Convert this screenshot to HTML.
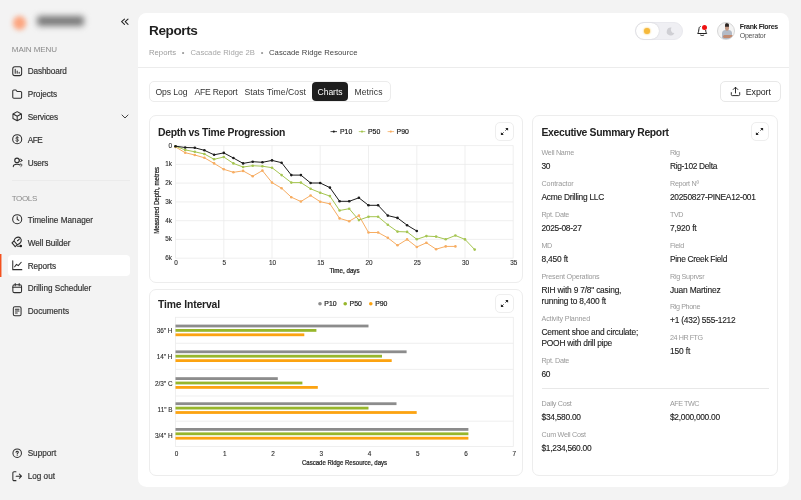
<!DOCTYPE html>
<html><head><meta charset="utf-8"><title>Reports</title>
<style>
*{box-sizing:border-box;margin:0;padding:0}
html,body{width:801px;height:500px;overflow:hidden}
body{background:#f3f3f3;font-family:"Liberation Sans",sans-serif;position:relative;color:#2a2a2a}
.t{position:absolute;white-space:nowrap;line-height:1}
.abs{position:absolute}
.main{position:absolute;left:138px;top:13px;width:651px;height:474px;background:#fff;border-radius:8.5px}
.hr{position:absolute;height:1px;background:#ececec}
.card{position:absolute;background:#fff;border:1px solid #ededed;border-radius:7px}
.btn{position:absolute;background:#fff;border:1px solid #e8e8e8;border-radius:5px}
svg{position:absolute;left:0;top:0;overflow:visible}
svg text{font-family:"Liberation Sans",sans-serif}
.ax{font-size:6.4px;fill:#2c2c2c;stroke:#2c2c2c;stroke-width:0.12px}
.lg{font-size:6.9px;fill:#1e1e1e;stroke:#1e1e1e;stroke-width:0.2px}
.axt{font-size:6.4px;fill:#1e1e1e;stroke:#1e1e1e;stroke-width:0.22px}
.ico{position:absolute;fill:none;stroke:#2e2e2e;stroke-width:1.1;stroke-linecap:round;stroke-linejoin:round}
.nav{color:#333;-webkit-text-stroke:0.18px #333}
.sec{color:#8a8a8a}
.lab{color:#999}
.val{color:#222;-webkit-text-stroke:0.12px #222}
#root{position:absolute;left:0;top:0;width:801px;height:500px;will-change:transform;transform:translateZ(0)}
</style></head><body><div id="root">

<!-- ============ SIDEBAR ============ -->
<div class="abs" style="left:13.4px;top:16px;width:12.5px;height:13.5px;border-radius:6.5px;background:#fca57f;filter:blur(2.6px)"></div>
<div class="abs" style="left:36.5px;top:16.4px;width:47.5px;height:9.5px;border-radius:3px;background:#787878;filter:blur(3px)"></div>
<svg class="ico" style="left:118px;top:16px" width="14" height="12" viewBox="0 0 14 12"><path d="M6.5 3.1 L3.6 5.7 L6.5 8.3 M10 3.1 L7.2 5.7 L10 8.3" stroke="#222" stroke-width="1.1"/></svg>

<div class="abs" style="left:0;top:253.7px;width:2px;height:23.3px;background:linear-gradient(90deg,#f4511e 0,#f4511e 1px,rgba(244,81,30,.45) 1px)"></div>
<div class="abs" style="left:8px;top:255px;width:122px;height:21px;background:#fff;border-radius:4px"></div>
<div class="t sec" style="left:11.8px;top:46px;font-size:8px;letter-spacing:-0.065px;">MAIN MENU</div><div class="t sec" style="left:11.7px;top:195px;font-size:8px;letter-spacing:-0.357px;">TOOLS</div>

<svg class="ico" style="left:11.8px;top:65.6px" width="10.4" height="10.4" viewBox="0 0 11 11"><rect x="0.8" y="0.8" width="9.4" height="9.4" rx="2.2"/><path d="M3.4 3.4 V7.6 M5.5 5.4 V7.6 M7.6 6.6 V7.6"/></svg>
<div class="t nav" style="left:27.7px;top:68px;font-size:8.2px;letter-spacing:-0.107px;">Dashboard</div>
<svg class="ico" style="left:12.0px;top:88.6px" width="10.4" height="10.4" viewBox="0 0 11 11"><path d="M0.8 2.2 A1.2 1.2 0 0 1 2 1 H4.2 L5.4 2.6 H9 A1.2 1.2 0 0 1 10.2 3.8 V8.6 A1.2 1.2 0 0 1 9 9.8 H2 A1.2 1.2 0 0 1 0.8 8.6 Z"/></svg>
<div class="t nav" style="left:27.7px;top:91px;font-size:8.2px;letter-spacing:-0.010px;">Projects</div>
<svg class="ico" style="left:12.0px;top:111.4px" width="10.4" height="10.4" viewBox="0 0 11 11"><path d="M5.5 0.7 L10 3.1 V7.9 L5.5 10.3 L1 7.9 V3.1 Z M1.2 3.2 L5.5 5.5 L9.8 3.2 M5.5 5.5 V10.2"/></svg>
<div class="t nav" style="left:27.7px;top:114px;font-size:8.2px;letter-spacing:-0.138px;">Services</div>
<svg class="ico" style="left:11.7px;top:134.2px" width="10.4" height="10.4" viewBox="0 0 11 11"><circle cx="5.5" cy="5.5" r="4.8"/><path d="M7 3.9 C6.6 3.2 4.2 3 4.1 4.4 C4 5.7 7 5.2 6.9 6.7 C6.8 8 4.5 7.9 3.9 7 M5.5 2.6 V8.4" stroke-width="0.85"/></svg>
<div class="t nav" style="left:27.7px;top:137px;font-size:8.2px;letter-spacing:-0.450px;">AFE</div>
<svg class="ico" style="left:8px;top:152px" width="20" height="20" viewBox="0 0 20 20"><circle cx="9" cy="8.4" r="2.25"/><path d="M5.3 14.6 C5.3 13.1 6.7 12.3 9 12.3 C10.3 12.3 11.3 12.5 12 13"/><circle cx="12.7" cy="8.4" r="1.2" stroke-width="0.9"/><path d="M12.3 12 C13.5 11.8 14.3 12.6 13.9 13.5 L12.9 14.4" stroke-width="0.9"/></svg>
<div class="t nav" style="left:27.7px;top:160px;font-size:8.2px;letter-spacing:-0.198px;">Users</div>
<svg class="ico" style="left:11.8px;top:214.2px" width="10.4" height="10.4" viewBox="0 0 11 11"><circle cx="5.5" cy="5.5" r="4.8"/><path d="M5.5 2.8 V5.6 L7.2 6.8"/></svg>
<div class="t nav" style="left:27.7px;top:217px;font-size:8.2px;letter-spacing:0.010px;">Timeline Manager</div>
<svg class="ico" style="left:8px;top:232px" width="20" height="20" viewBox="0 0 20 20"><path d="M4 10.8 L7.2 14.7 L9.3 12.8 L6 9 Z M6 9 C6.3 7.6 7 6.4 8 5.8 C9.4 4.9 11.4 5.1 12.4 6 C13.3 7 13.5 8.4 13.1 9.5 C12.6 10.8 11.2 12.1 9.3 12.8 M9.7 8.6 L11.3 7.1 M9.6 14.3 H11.4"/><circle cx="9.7" cy="8.6" r="0.7" fill="#2e2e2e" stroke="none"/><circle cx="12.8" cy="14.1" r="1.25" fill="#1e1e1e" stroke="none"/></svg>
<div class="t nav" style="left:27.7px;top:240px;font-size:8.2px;letter-spacing:-0.071px;">Well Builder</div>
<svg class="ico" style="left:12.0px;top:260.2px" width="10.4" height="10.4" viewBox="0 0 11 11"><path d="M0.8 0.8 V10.2 H10.4 M2.8 7.2 L4.8 4.6 L6.6 6 L9.8 2.4"/></svg>
<div class="t nav" style="left:27.7px;top:263px;font-size:8.2px;letter-spacing:-0.053px;">Reports</div>
<svg class="ico" style="left:11.9px;top:283.2px" width="10.4" height="10.4" viewBox="0 0 11 11"><rect x="0.9" y="1.8" width="9.2" height="8.4" rx="1.8"/><path d="M0.9 4.6 H10.1 M3.4 0.6 V2.8 M7.6 0.6 V2.8"/></svg>
<div class="t nav" style="left:27.7px;top:285px;font-size:8.2px;letter-spacing:-0.032px;">Drilling Scheduler</div>
<svg class="ico" style="left:12.0px;top:306.2px" width="10.4" height="10.4" viewBox="0 0 11 11"><rect x="1.4" y="0.7" width="8.2" height="9.6" rx="1.6"/><path d="M3.6 3.4 H7.4 M3.6 5.4 H7.4 M3.6 7.4 H5.6"/></svg>
<div class="t nav" style="left:27.7px;top:308px;font-size:8.2px;letter-spacing:-0.014px;">Documents</div>
<svg class="ico" style="left:11.9px;top:447.9px" width="10.4" height="10.4" viewBox="0 0 11 11"><circle cx="5.5" cy="5.5" r="4.5"/><path d="M4.3 4.5 C4.3 3.2 6.7 3.2 6.7 4.5 C6.7 5.3 5.5 5.3 5.5 6.3" stroke-width="1.1"/><circle cx="5.5" cy="7.8" r="0.55" fill="#333" stroke="none"/></svg>
<div class="t nav" style="left:27.7px;top:450px;font-size:8.2px;letter-spacing:-0.027px;">Support</div>
<svg class="ico" style="left:11.8px;top:470.7px" width="10.4" height="10.4" viewBox="0 0 11 11"><path d="M4.2 0.8 H2.2 A1.3 1.3 0 0 0 0.9 2.1 V8.9 A1.3 1.3 0 0 0 2.2 10.2 H4.2 M4.4 5.5 H10 M7.8 3.3 L10 5.5 L7.8 7.7"/></svg>
<div class="t nav" style="left:27.7px;top:473px;font-size:8.2px;letter-spacing:-0.004px;">Log out</div>
<svg class="ico" style="left:120.5px;top:114.2px" width="8" height="5" viewBox="0 0 8 5"><path d="M1 1 L4 4 L7 1" stroke-width="0.9"/></svg>


<div class="hr" style="left:12px;top:180px;width:118px;background:#ebebeb"></div>


<!-- ============ MAIN ============ -->
<div class="main"></div>
<div class="hr" style="left:138px;top:67px;width:651px"></div>

<!-- toggle -->
<div class="abs" style="left:634.5px;top:22px;width:48.5px;height:18px;border-radius:9px;background:#efeff3;border:1px solid #e9e9ee"></div>
<div class="abs" style="left:635.5px;top:23px;width:23.5px;height:16px;border-radius:8px;background:#fff;box-shadow:0 0 1.5px rgba(0,0,0,.18)"></div>
<div class="abs" style="left:643.6px;top:27.9px;width:6.4px;height:6.4px;border-radius:50%;background:#f6b93b;box-shadow:0 0 1.6px 0.6px #fad98a"></div>
<svg class="abs" style="left:665.5px;top:26.5px" width="9" height="9" viewBox="0 0 9 9"><path d="M5.6 0.6 A4 4 0 1 0 8.4 6.1 A3.4 3.4 0 0 1 5.6 0.6 Z" fill="#cfcfd4"/></svg>
<!-- bell -->
<svg class="abs" style="left:696px;top:24px" width="13" height="13" viewBox="0 0 13 13"><path d="M4.2 2.6 C3.4 2.9 3.1 3.6 3 4.6 L2.5 7.8 C2.4 8.6 1.9 8.9 1.7 9.5 H10.7 C10.5 8.9 10 8.6 9.9 7.8 L9.7 6.4 M4.6 11.2 C5.3 11.7 7.1 11.7 7.8 11.2" fill="none" stroke="#222" stroke-width="1" stroke-linecap="round" stroke-linejoin="round"/></svg>
<div class="abs" style="left:702.2px;top:24.8px;width:5.2px;height:5.2px;border-radius:50%;background:#ef1111"></div>
<!-- avatar -->
<div class="abs" style="left:717px;top:21.7px;width:18.4px;height:18.4px;border-radius:50%;background:#f4f4f4;border:0.7px solid #d6d6d6;overflow:hidden">
  <div class="abs" style="left:3.8px;top:7.6px;width:10.6px;height:9px;border-radius:3.5px 3.5px 1px 1px;background:#b2bac6"></div>
  <div class="abs" style="left:6.5px;top:1.4px;width:4.9px;height:6.6px;border-radius:45%;background:#c49a85"></div>
  <div class="abs" style="left:6.6px;top:0.8px;width:4.7px;height:2.3px;border-radius:2.3px 2.3px 0.5px 0.5px;background:#2b2522"></div>
  <div class="abs" style="left:7px;top:3.6px;width:3.9px;height:0.9px;background:#3a302c;opacity:.8"></div>
  <div class="abs" style="left:4.6px;top:12.2px;width:11.2px;height:3.6px;border-radius:2px;background:#c08a70"></div>
  <div class="abs" style="left:5.2px;top:15px;width:9.6px;height:3px;background:#b2bac6"></div>
</div>
<!-- tabs -->
<div class="btn" style="left:149px;top:81px;width:241.5px;height:21px;border-radius:5px;border-color:#ececec"></div>
<div class="abs" style="left:312.3px;top:82.3px;width:35.5px;height:18.5px;border-radius:4px;background:#1e1e1e"></div>

<!-- export -->
<div class="btn" style="left:720px;top:81px;width:60.5px;height:21px;border-radius:5px"></div>
<svg class="ico" style="left:730px;top:86px" width="11" height="11" viewBox="0 0 11 11"><path d="M5.5 7 V1.4 M3.2 3.5 L5.5 1.2 L7.8 3.5 M1.3 6.6 V8.6 A1 1 0 0 0 2.3 9.6 H8.7 A1 1 0 0 0 9.7 8.6 V6.6" stroke="#222" stroke-width="0.95"/></svg>

<!-- cards -->
<div class="card" style="left:149px;top:115px;width:373.5px;height:167.5px"></div>
<div class="card" style="left:149px;top:288.5px;width:373.5px;height:187px"></div>
<div class="card" style="left:532px;top:115px;width:245.5px;height:360.5px"></div>


<!-- expand buttons -->
<div class="btn" style="left:495.1px;top:121.9px;width:18.6px;height:18.8px;border-radius:5px;border-color:#eeeeee"></div>
<svg class="abs" style="left:499.9px;top:126.8px" width="9" height="9" viewBox="0 0 9 9"><path d="M5.2 0.9 H8.1 V3.8 Z M0.9 5.2 V8.1 H3.8 Z" fill="#222"/><path d="M7.6 1.4 L5.4 3.6 M1.4 7.6 L3.6 5.4" stroke="#222" stroke-width="0.9" fill="none"/></svg>
<div class="btn" style="left:495.1px;top:294.0px;width:18.6px;height:18.8px;border-radius:5px;border-color:#eeeeee"></div>
<svg class="abs" style="left:499.9px;top:298.9px" width="9" height="9" viewBox="0 0 9 9"><path d="M5.2 0.9 H8.1 V3.8 Z M0.9 5.2 V8.1 H3.8 Z" fill="#222"/><path d="M7.6 1.4 L5.4 3.6 M1.4 7.6 L3.6 5.4" stroke="#222" stroke-width="0.9" fill="none"/></svg>
<div class="btn" style="left:750.5px;top:122.0px;width:18.6px;height:18.8px;border-radius:5px;border-color:#eeeeee"></div>
<svg class="abs" style="left:755.3px;top:126.9px" width="9" height="9" viewBox="0 0 9 9"><path d="M5.2 0.9 H8.1 V3.8 Z M0.9 5.2 V8.1 H3.8 Z" fill="#222"/><path d="M7.6 1.4 L5.4 3.6 M1.4 7.6 L3.6 5.4" stroke="#222" stroke-width="0.9" fill="none"/></svg>


<!-- legends -->
<svg width="801" height="500" viewBox="0 0 801 500">
<g>
<line x1="330.5" x2="337" y1="131.6" y2="131.6" stroke="#1c1c1c" stroke-width="0.8"/><circle cx="333.8" cy="131.6" r="1.1" fill="#1c1c1c"/>
<line x1="358.8" x2="365.3" y1="131.6" y2="131.6" stroke="#a5c551" stroke-width="0.8"/><circle cx="362" cy="131.6" r="1.1" fill="#a5c551"/>
<line x1="387.6" x2="394.1" y1="131.6" y2="131.6" stroke="#f7ad62" stroke-width="0.8"/><circle cx="390.8" cy="131.6" r="1.1" fill="#f7ad62"/>
<text x="340" y="134" class="lg">P10</text>
<text x="368" y="134" class="lg">P50</text>
<text x="396.6" y="134" class="lg">P90</text>
<circle cx="320" cy="303.8" r="1.8" fill="#8c8c8c"/><circle cx="345.2" cy="303.8" r="1.8" fill="#97b62b"/><circle cx="370.8" cy="303.8" r="1.8" fill="#fca311"/>
<text x="324.3" y="306.2" class="lg">P10</text>
<text x="349.6" y="306.2" class="lg">P50</text>
<text x="375.2" y="306.2" class="lg">P90</text>
</g>
<line x1="175.5" x2="513.2" y1="145.6" y2="145.6" stroke="#ebebeb" stroke-width="0.8"/><line x1="175.5" x2="513.2" y1="164.4" y2="164.4" stroke="#ebebeb" stroke-width="0.8"/><line x1="175.5" x2="513.2" y1="183.1" y2="183.1" stroke="#ebebeb" stroke-width="0.8"/><line x1="175.5" x2="513.2" y1="201.9" y2="201.9" stroke="#ebebeb" stroke-width="0.8"/><line x1="175.5" x2="513.2" y1="220.7" y2="220.7" stroke="#ebebeb" stroke-width="0.8"/><line x1="175.5" x2="513.2" y1="239.4" y2="239.4" stroke="#ebebeb" stroke-width="0.8"/><line x1="175.5" x2="513.2" y1="258.2" y2="258.2" stroke="#ebebeb" stroke-width="0.8"/><line x1="175.5" x2="175.5" y1="145.6" y2="258.2" stroke="#ebebeb" stroke-width="0.8"/><line x1="223.8" x2="223.8" y1="145.6" y2="258.2" stroke="#ebebeb" stroke-width="0.8"/><line x1="272.0" x2="272.0" y1="145.6" y2="258.2" stroke="#ebebeb" stroke-width="0.8"/><line x1="320.2" x2="320.2" y1="145.6" y2="258.2" stroke="#ebebeb" stroke-width="0.8"/><line x1="368.5" x2="368.5" y1="145.6" y2="258.2" stroke="#ebebeb" stroke-width="0.8"/><line x1="416.8" x2="416.8" y1="145.6" y2="258.2" stroke="#ebebeb" stroke-width="0.8"/><line x1="465.0" x2="465.0" y1="145.6" y2="258.2" stroke="#ebebeb" stroke-width="0.8"/><line x1="513.2" x2="513.2" y1="145.6" y2="258.2" stroke="#ebebeb" stroke-width="0.8"/>
<polyline fill="none" stroke="#f7ad62" stroke-width="1" stroke-linejoin="round" points="175.5,146.9 185.2,152.7 194.8,155.0 204.4,157.8 214.1,163.4 223.8,169.3 233.4,172.3 243.1,170.9 252.7,176.2 262.4,170.6 272.0,182.6 281.6,188.2 291.3,197.2 300.9,201.5 310.6,195.5 320.2,201.7 329.9,203.8 339.6,218.4 349.2,221.2 358.9,215.6 368.5,232.5 378.1,232.5 387.8,237.8 397.5,245.3 407.1,239.4 416.8,247.0 426.4,242.8 436.1,249.2 445.7,246.4 455.4,246.4"/><circle cx="175.5" cy="146.9" r="1.3" fill="#f7ad62"/><circle cx="185.2" cy="152.7" r="1.3" fill="#f7ad62"/><circle cx="194.8" cy="155.0" r="1.3" fill="#f7ad62"/><circle cx="204.4" cy="157.8" r="1.3" fill="#f7ad62"/><circle cx="214.1" cy="163.4" r="1.3" fill="#f7ad62"/><circle cx="223.8" cy="169.3" r="1.3" fill="#f7ad62"/><circle cx="233.4" cy="172.3" r="1.3" fill="#f7ad62"/><circle cx="243.1" cy="170.9" r="1.3" fill="#f7ad62"/><circle cx="252.7" cy="176.2" r="1.3" fill="#f7ad62"/><circle cx="262.4" cy="170.6" r="1.3" fill="#f7ad62"/><circle cx="272.0" cy="182.6" r="1.3" fill="#f7ad62"/><circle cx="281.6" cy="188.2" r="1.3" fill="#f7ad62"/><circle cx="291.3" cy="197.2" r="1.3" fill="#f7ad62"/><circle cx="300.9" cy="201.5" r="1.3" fill="#f7ad62"/><circle cx="310.6" cy="195.5" r="1.3" fill="#f7ad62"/><circle cx="320.2" cy="201.7" r="1.3" fill="#f7ad62"/><circle cx="329.9" cy="203.8" r="1.3" fill="#f7ad62"/><circle cx="339.6" cy="218.4" r="1.3" fill="#f7ad62"/><circle cx="349.2" cy="221.2" r="1.3" fill="#f7ad62"/><circle cx="358.9" cy="215.6" r="1.3" fill="#f7ad62"/><circle cx="368.5" cy="232.5" r="1.3" fill="#f7ad62"/><circle cx="378.1" cy="232.5" r="1.3" fill="#f7ad62"/><circle cx="387.8" cy="237.8" r="1.3" fill="#f7ad62"/><circle cx="397.5" cy="245.3" r="1.3" fill="#f7ad62"/><circle cx="407.1" cy="239.4" r="1.3" fill="#f7ad62"/><circle cx="416.8" cy="247.0" r="1.3" fill="#f7ad62"/><circle cx="426.4" cy="242.8" r="1.3" fill="#f7ad62"/><circle cx="436.1" cy="249.2" r="1.3" fill="#f7ad62"/><circle cx="445.7" cy="246.4" r="1.3" fill="#f7ad62"/><circle cx="455.4" cy="246.4" r="1.3" fill="#f7ad62"/>
<polyline fill="none" stroke="#a5c551" stroke-width="1" stroke-linejoin="round" points="175.5,146.2 185.2,149.9 194.8,151.8 204.4,154.0 214.1,159.3 223.8,157.0 233.4,163.4 243.1,167.0 252.7,165.7 262.4,166.2 272.0,167.7 281.6,175.1 291.3,182.6 300.9,182.6 310.6,188.8 320.2,192.7 329.9,196.1 339.6,210.5 349.2,208.7 358.9,220.1 368.5,216.7 378.1,216.7 387.8,224.8 397.5,231.6 407.1,231.9 416.8,239.3 426.4,236.1 436.1,236.6 445.7,239.3 455.4,235.5 465.0,239.4 474.7,249.6"/><circle cx="175.5" cy="146.2" r="1.3" fill="#a5c551"/><circle cx="185.2" cy="149.9" r="1.3" fill="#a5c551"/><circle cx="194.8" cy="151.8" r="1.3" fill="#a5c551"/><circle cx="204.4" cy="154.0" r="1.3" fill="#a5c551"/><circle cx="214.1" cy="159.3" r="1.3" fill="#a5c551"/><circle cx="223.8" cy="157.0" r="1.3" fill="#a5c551"/><circle cx="233.4" cy="163.4" r="1.3" fill="#a5c551"/><circle cx="243.1" cy="167.0" r="1.3" fill="#a5c551"/><circle cx="252.7" cy="165.7" r="1.3" fill="#a5c551"/><circle cx="262.4" cy="166.2" r="1.3" fill="#a5c551"/><circle cx="272.0" cy="167.7" r="1.3" fill="#a5c551"/><circle cx="281.6" cy="175.1" r="1.3" fill="#a5c551"/><circle cx="291.3" cy="182.6" r="1.3" fill="#a5c551"/><circle cx="300.9" cy="182.6" r="1.3" fill="#a5c551"/><circle cx="310.6" cy="188.8" r="1.3" fill="#a5c551"/><circle cx="320.2" cy="192.7" r="1.3" fill="#a5c551"/><circle cx="329.9" cy="196.1" r="1.3" fill="#a5c551"/><circle cx="339.6" cy="210.5" r="1.3" fill="#a5c551"/><circle cx="349.2" cy="208.7" r="1.3" fill="#a5c551"/><circle cx="358.9" cy="220.1" r="1.3" fill="#a5c551"/><circle cx="368.5" cy="216.7" r="1.3" fill="#a5c551"/><circle cx="378.1" cy="216.7" r="1.3" fill="#a5c551"/><circle cx="387.8" cy="224.8" r="1.3" fill="#a5c551"/><circle cx="397.5" cy="231.6" r="1.3" fill="#a5c551"/><circle cx="407.1" cy="231.9" r="1.3" fill="#a5c551"/><circle cx="416.8" cy="239.3" r="1.3" fill="#a5c551"/><circle cx="426.4" cy="236.1" r="1.3" fill="#a5c551"/><circle cx="436.1" cy="236.6" r="1.3" fill="#a5c551"/><circle cx="445.7" cy="239.3" r="1.3" fill="#a5c551"/><circle cx="455.4" cy="235.5" r="1.3" fill="#a5c551"/><circle cx="465.0" cy="239.4" r="1.3" fill="#a5c551"/><circle cx="474.7" cy="249.6" r="1.3" fill="#a5c551"/>
<polyline fill="none" stroke="#1c1c1c" stroke-width="1" stroke-linejoin="round" points="175.5,146.2 185.2,147.5 194.8,147.8 204.4,150.3 214.1,154.8 223.8,152.9 233.4,158.0 243.1,163.4 252.7,161.7 262.4,162.3 272.0,160.4 281.6,162.7 291.3,175.1 300.9,175.1 310.6,183.0 320.2,183.0 329.9,187.6 339.6,201.3 349.2,201.3 358.9,197.8 368.5,205.3 378.1,205.3 387.8,215.6 397.5,217.9 407.1,225.2 416.8,231.0"/><circle cx="175.5" cy="146.2" r="1.3" fill="#1c1c1c"/><circle cx="185.2" cy="147.5" r="1.3" fill="#1c1c1c"/><circle cx="194.8" cy="147.8" r="1.3" fill="#1c1c1c"/><circle cx="204.4" cy="150.3" r="1.3" fill="#1c1c1c"/><circle cx="214.1" cy="154.8" r="1.3" fill="#1c1c1c"/><circle cx="223.8" cy="152.9" r="1.3" fill="#1c1c1c"/><circle cx="233.4" cy="158.0" r="1.3" fill="#1c1c1c"/><circle cx="243.1" cy="163.4" r="1.3" fill="#1c1c1c"/><circle cx="252.7" cy="161.7" r="1.3" fill="#1c1c1c"/><circle cx="262.4" cy="162.3" r="1.3" fill="#1c1c1c"/><circle cx="272.0" cy="160.4" r="1.3" fill="#1c1c1c"/><circle cx="281.6" cy="162.7" r="1.3" fill="#1c1c1c"/><circle cx="291.3" cy="175.1" r="1.3" fill="#1c1c1c"/><circle cx="300.9" cy="175.1" r="1.3" fill="#1c1c1c"/><circle cx="310.6" cy="183.0" r="1.3" fill="#1c1c1c"/><circle cx="320.2" cy="183.0" r="1.3" fill="#1c1c1c"/><circle cx="329.9" cy="187.6" r="1.3" fill="#1c1c1c"/><circle cx="339.6" cy="201.3" r="1.3" fill="#1c1c1c"/><circle cx="349.2" cy="201.3" r="1.3" fill="#1c1c1c"/><circle cx="358.9" cy="197.8" r="1.3" fill="#1c1c1c"/><circle cx="368.5" cy="205.3" r="1.3" fill="#1c1c1c"/><circle cx="378.1" cy="205.3" r="1.3" fill="#1c1c1c"/><circle cx="387.8" cy="215.6" r="1.3" fill="#1c1c1c"/><circle cx="397.5" cy="217.9" r="1.3" fill="#1c1c1c"/><circle cx="407.1" cy="225.2" r="1.3" fill="#1c1c1c"/><circle cx="416.8" cy="231.0" r="1.3" fill="#1c1c1c"/>
<text x="172.0" y="147.5" text-anchor="end" class="ax">0</text><text x="172.0" y="166.3" text-anchor="end" class="ax">1k</text><text x="172.0" y="185.0" text-anchor="end" class="ax">2k</text><text x="172.0" y="203.8" text-anchor="end" class="ax">3k</text><text x="172.0" y="222.6" text-anchor="end" class="ax">4k</text><text x="172.0" y="241.3" text-anchor="end" class="ax">5k</text><text x="172.0" y="260.1" text-anchor="end" class="ax">6k</text><text x="176.0" y="264.8" text-anchor="middle" class="ax">0</text><text x="224.2" y="264.8" text-anchor="middle" class="ax">5</text><text x="272.5" y="264.8" text-anchor="middle" class="ax">10</text><text x="320.8" y="264.8" text-anchor="middle" class="ax">15</text><text x="369.0" y="264.8" text-anchor="middle" class="ax">20</text><text x="417.2" y="264.8" text-anchor="middle" class="ax">25</text><text x="465.5" y="264.8" text-anchor="middle" class="ax">30</text><text x="513.8" y="264.8" text-anchor="middle" class="ax">35</text><text x="344.5" y="272.6" text-anchor="middle" class="axt" textLength="30.2" lengthAdjust="spacingAndGlyphs">Time, days</text><text transform="translate(158.9,200.4) rotate(-90)" text-anchor="middle" class="axt" textLength="66.9" lengthAdjust="spacingAndGlyphs">Measured Depth, metres</text>

<rect x="175.5" y="317.3" width="337.8" height="129.1" fill="none" stroke="#ebebeb" stroke-width="0.8"/><line x1="175.5" x2="513.2" y1="343.3" y2="343.3" stroke="#ebebeb" stroke-width="0.8"/><line x1="175.5" x2="513.2" y1="369.4" y2="369.4" stroke="#ebebeb" stroke-width="0.8"/><line x1="175.5" x2="513.2" y1="396.0" y2="396.0" stroke="#ebebeb" stroke-width="0.8"/><line x1="175.5" x2="513.2" y1="421.2" y2="421.2" stroke="#ebebeb" stroke-width="0.8"/><rect x="175.5" y="324.60" width="193.0" height="2.8" fill="#8c8c8c"/><rect x="175.5" y="329.00" width="140.9" height="2.8" fill="#97b62b"/><rect x="175.5" y="333.40" width="128.8" height="2.8" fill="#fca311"/><text x="172.5" y="332.9" text-anchor="end" class="ax">36&quot; H</text><rect x="175.5" y="350.40" width="231.1" height="2.8" fill="#8c8c8c"/><rect x="175.5" y="354.80" width="206.5" height="2.8" fill="#97b62b"/><rect x="175.5" y="359.20" width="216.2" height="2.8" fill="#fca311"/><text x="172.5" y="359.3" text-anchor="end" class="ax">14&quot; H</text><rect x="175.5" y="377.20" width="102.3" height="2.8" fill="#8c8c8c"/><rect x="175.5" y="381.60" width="126.9" height="2.8" fill="#97b62b"/><rect x="175.5" y="386.00" width="142.3" height="2.8" fill="#fca311"/><text x="172.5" y="386.0" text-anchor="end" class="ax">2/3&quot; C</text><rect x="175.5" y="402.30" width="221.0" height="2.8" fill="#8c8c8c"/><rect x="175.5" y="406.70" width="193.0" height="2.8" fill="#97b62b"/><rect x="175.5" y="411.10" width="241.2" height="2.8" fill="#fca311"/><text x="172.5" y="412.3" text-anchor="end" class="ax">11&quot; B</text><rect x="175.5" y="428.00" width="292.9" height="2.8" fill="#8c8c8c"/><rect x="175.5" y="432.40" width="292.9" height="2.8" fill="#97b62b"/><rect x="175.5" y="436.80" width="292.9" height="2.8" fill="#fca311"/><text x="172.5" y="438.2" text-anchor="end" class="ax">3/4&quot; H</text>
<text x="176.5" y="456.3" text-anchor="middle" class="ax">0</text><text x="224.8" y="456.3" text-anchor="middle" class="ax">1</text><text x="273.0" y="456.3" text-anchor="middle" class="ax">2</text><text x="321.2" y="456.3" text-anchor="middle" class="ax">3</text><text x="369.5" y="456.3" text-anchor="middle" class="ax">4</text><text x="417.8" y="456.3" text-anchor="middle" class="ax">5</text><text x="466.0" y="456.3" text-anchor="middle" class="ax">6</text><text x="514.2" y="456.3" text-anchor="middle" class="ax">7</text><text x="344.5" y="464.8" text-anchor="middle" class="axt" textLength="85.2" lengthAdjust="spacingAndGlyphs">Cascade Ridge Resource, days</text>

</svg>

<div class="t " style="left:149.0px;top:24px;font-size:13.6px;letter-spacing:-0.411px;font-weight:bold;color:#1f1f1f">Reports</div>
<div class="t " style="left:149.0px;top:49px;font-size:7.7px;letter-spacing:0.011px;color:#9b9b9b">Reports</div><div class="t " style="left:181.7px;top:49px;font-size:7.7px;color:#9b9b9b">•</div><div class="t " style="left:190.5px;top:49px;font-size:7.7px;letter-spacing:0.024px;color:#a6a6a6">Cascade Ridge 2B</div><div class="t " style="left:260.7px;top:49px;font-size:7.7px;color:#9b9b9b">•</div><div class="t " style="left:269.0px;top:49px;font-size:7.7px;letter-spacing:0.040px;color:#444">Cascade Ridge Resource</div>
<div class="t " style="left:739.7px;top:23px;font-size:7px;letter-spacing:-0.318px;font-weight:bold;color:#222">Frank Flores</div><div class="t " style="left:739.7px;top:32px;font-size:7px;letter-spacing:-0.203px;color:#555">Operator</div>
<div class="t " style="left:155.5px;top:88px;font-size:8.6px;letter-spacing:-0.071px;color:#333">Ops Log</div><div class="t " style="left:194.5px;top:88px;font-size:8.6px;letter-spacing:-0.191px;color:#333">AFE Report</div><div class="t " style="left:244.5px;top:88px;font-size:8.6px;letter-spacing:0.056px;color:#333">Stats Time/Cost</div><div class="t " style="left:317.5px;top:88px;font-size:8.6px;letter-spacing:-0.052px;color:#fff">Charts</div><div class="t " style="left:354.5px;top:88px;font-size:8.6px;letter-spacing:0.042px;color:#333">Metrics</div>
<div class="t " style="left:745.8px;top:88px;font-size:8.8px;letter-spacing:-0.056px;color:#222">Export</div>
<div class="t " style="left:158.0px;top:128px;font-size:10.4px;letter-spacing:-0.294px;font-weight:bold;color:#222">Depth vs Time Progression</div><div class="t " style="left:158.0px;top:300px;font-size:10.4px;letter-spacing:-0.148px;font-weight:bold;color:#222">Time Interval</div><div class="t " style="left:541.5px;top:128px;font-size:10.4px;letter-spacing:-0.329px;font-weight:bold;color:#222">Executive Summary Report</div>

<!-- summary -->
<div class="t lab" style="left:541.5px;top:149px;font-size:7.2px;letter-spacing:-0.280px;">Well Name</div>
<div class="t val" style="left:541.5px;top:162px;font-size:8.4px;letter-spacing:-0.414px;">30</div>
<div class="t lab" style="left:541.5px;top:180px;font-size:7.2px;letter-spacing:-0.156px;">Contractor</div>
<div class="t val" style="left:541.5px;top:193px;font-size:8.4px;letter-spacing:-0.267px;">Acme Drilling LLC</div>
<div class="t lab" style="left:541.5px;top:211px;font-size:7.2px;letter-spacing:-0.319px;">Rpt. Date</div>
<div class="t val" style="left:541.5px;top:224px;font-size:8.4px;letter-spacing:-0.284px;">2025-08-27</div>
<div class="t lab" style="left:541.5px;top:242px;font-size:7.2px;letter-spacing:-0.450px;">MD</div>
<div class="t val" style="left:541.5px;top:255px;font-size:8.4px;letter-spacing:-0.182px;">8,450 ft</div>
<div class="t lab" style="left:541.5px;top:273px;font-size:7.2px;letter-spacing:-0.219px;">Present Operations</div>
<div class="t val" style="left:541.5px;top:286px;font-size:8.4px;letter-spacing:-0.204px;">RIH with 9 7/8&quot; casing,</div>
<div class="t val" style="left:541.5px;top:297px;font-size:8.4px;letter-spacing:-0.159px;">running to 8,400 ft</div>
<div class="t lab" style="left:541.5px;top:315px;font-size:7.2px;letter-spacing:-0.165px;">Activity Planned</div>
<div class="t val" style="left:541.5px;top:328px;font-size:8.4px;letter-spacing:-0.210px;">Cement shoe and circulate;</div>
<div class="t val" style="left:541.5px;top:339px;font-size:8.4px;letter-spacing:-0.245px;">POOH with drill pipe</div>
<div class="t lab" style="left:541.5px;top:357px;font-size:7.2px;letter-spacing:-0.319px;">Rpt. Date</div>
<div class="t val" style="left:541.5px;top:370px;font-size:8.4px;letter-spacing:-0.414px;">60</div>
<div class="t lab" style="left:541.5px;top:400px;font-size:7.2px;letter-spacing:-0.277px;">Daily Cost</div>
<div class="t val" style="left:541.5px;top:413px;font-size:8.4px;letter-spacing:-0.267px;">$34,580.00</div>
<div class="t lab" style="left:541.5px;top:431px;font-size:7.2px;letter-spacing:-0.273px;">Cum Well Cost</div>
<div class="t val" style="left:541.5px;top:444px;font-size:8.4px;letter-spacing:-0.293px;">$1,234,560.00</div>
<div class="t lab" style="left:670.0px;top:149px;font-size:7.2px;letter-spacing:-0.450px;">Rig</div>
<div class="t val" style="left:670.0px;top:162px;font-size:8.4px;letter-spacing:-0.325px;">Rig-102 Delta</div>
<div class="t lab" style="left:670.0px;top:180px;font-size:7.2px;letter-spacing:-0.293px;">Report Nº</div>
<div class="t val" style="left:670.0px;top:193px;font-size:8.4px;letter-spacing:-0.288px;">20250827-PINEA12-001</div>
<div class="t lab" style="left:670.0px;top:211px;font-size:7.2px;letter-spacing:-0.450px;">TVD</div>
<div class="t val" style="left:670.0px;top:224px;font-size:8.4px;letter-spacing:-0.182px;">7,920 ft</div>
<div class="t lab" style="left:670.0px;top:242px;font-size:7.2px;letter-spacing:-0.319px;">Field</div>
<div class="t val" style="left:670.0px;top:255px;font-size:8.4px;letter-spacing:-0.308px;">Pine Creek Field</div>
<div class="t lab" style="left:670.0px;top:273px;font-size:7.2px;letter-spacing:-0.300px;">Rig Suprvsr</div>
<div class="t val" style="left:670.0px;top:286px;font-size:8.4px;letter-spacing:-0.162px;">Juan Martinez</div>
<div class="t lab" style="left:670.0px;top:303px;font-size:7.2px;letter-spacing:-0.398px;">Rig Phone</div>
<div class="t val" style="left:670.0px;top:316px;font-size:8.4px;letter-spacing:-0.215px;">+1 (432) 555-1212</div>
<div class="t lab" style="left:670.0px;top:334px;font-size:7.2px;letter-spacing:-0.450px;">24 HR FTG</div>
<div class="t val" style="left:670.0px;top:347px;font-size:8.4px;letter-spacing:-0.111px;">150 ft</div>
<div class="t lab" style="left:670.0px;top:400px;font-size:7.2px;letter-spacing:-0.450px;">AFE TWC</div>
<div class="t val" style="left:670.0px;top:413px;font-size:8.4px;letter-spacing:-0.293px;">$2,000,000.00</div>

<div class="hr" style="left:541.5px;top:388px;width:227px;background:#e8e8e8"></div>

</div></body></html>
